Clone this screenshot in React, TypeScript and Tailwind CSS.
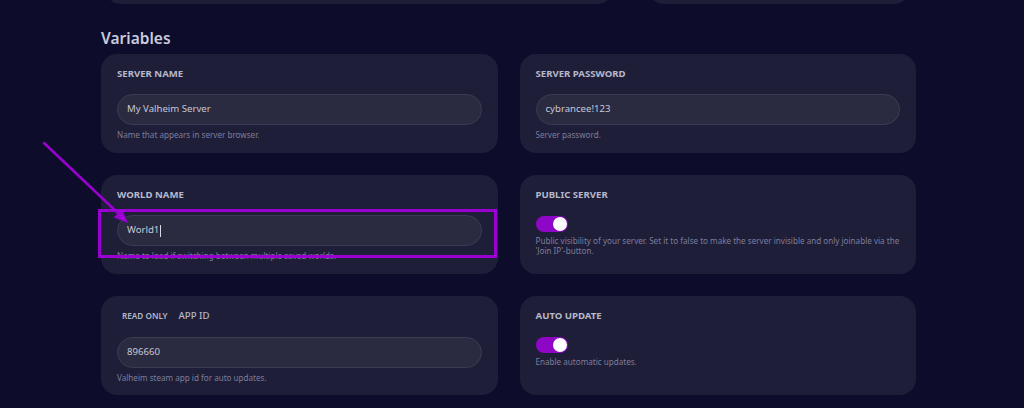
import React from 'react';

type FieldProps = { label: string; value: string; help: string; caret?: boolean };

function TextField({ label, value, help, caret }: FieldProps) {
  return (
    <div className="h-[99px] rounded-[16px] bg-[#1e1e38] px-[16px] pt-[13px]">
      <div className="text-[9.6px] font-bold leading-[14px] text-[#b6b8ca]">{label}</div>
      <div className="mt-[13px] flex h-[31px] items-center rounded-full border border-[#3b3b54] bg-[#2a2a40] px-[9px] text-[9.6px] text-[#c8c8d6]">
        {value}
        {caret && <span className="ml-[1px] inline-block h-[12px] w-[1px] bg-[#d8d8e4]"></span>}
      </div>
      <div className="mt-[4px] text-[8.1px] leading-[12px] text-[#7d7d9a]">{help}</div>
    </div>
  );
}

function Toggle() {
  return (
    <div className="flex h-[16px] w-[32px] items-center justify-end rounded-full bg-[#8e06c6] pr-[1px]">
      <div className="h-[14px] w-[14px] rounded-full bg-white"></div>
    </div>
  );
}

function ToggleField({ label, help }: { label: string; help: string }) {
  return (
    <div className="h-[99px] rounded-[16px] bg-[#1e1e38] px-[16px] pt-[13px]">
      <div className="text-[9.6px] font-bold leading-[14px] text-[#b6b8ca]">{label}</div>
      <div className="mt-[14px]">
        <Toggle />
      </div>
      <div className="mt-[4px] text-[8.1px] leading-[10px] text-[#7d7d9a]">{help}</div>
    </div>
  );
}

export default function App() {
  return (
    <div className="relative h-[408px] w-[1024px] overflow-hidden bg-[#0d0d2b] font-['Noto_Sans',sans-serif]">
      <div className="ml-[101px] w-[815px]">
        {/* Previous section, cut off */}
        <div className="-mt-[36px] flex gap-[35px] pl-[4px]">
          <div className="h-[40px] w-[508px] rounded-[16px] bg-[#1e1e38]"></div>
          <div className="h-[40px] w-[262px] rounded-[16px] bg-[#1e1e38]"></div>
        </div>

        <h2 className="mb-[6px] mt-[24px] text-[15.5px] font-semibold leading-[20px] text-[#c9cbdb]">Variables</h2>

        <div className="grid grid-cols-2 gap-[22px]">
          <TextField label="SERVER NAME" value="My Valheim Server" help="Name that appears in server browser." />
          <TextField label="SERVER PASSWORD" value="cybrancee!123" help="Server password." />
          <TextField
            label="WORLD NAME"
            value="World1"
            help="Name to load if switching between multiple saved worlds."
            caret
          />
          <ToggleField
            label="PUBLIC SERVER"
            help="Public visibility of your server. Set it to false to make the server invisible and only joinable via the 'Join IP'-button."
          />

          {/* Read only field */}
          <div className="h-[99px] rounded-[16px] bg-[#1e1e38] px-[16px] pt-[13px]">
            <div className="flex items-center leading-[14px]">
              <span className="px-[5px] text-[8.2px] font-semibold text-[#b6b8ca]">READ ONLY</span>
              <span className="ml-[6px] text-[9.6px] font-medium text-[#b6b8ca]">APP ID</span>
            </div>
            <div className="mt-[14px] flex h-[31px] items-center rounded-full border border-[#3b3b54] bg-[#2a2a40] px-[9px] text-[9.6px] text-[#c8c8d6]">
              896660
            </div>
            <div className="mt-[4px] text-[8.1px] leading-[12px] text-[#7d7d9a]">Valheim steam app id for auto updates.</div>
          </div>

          <ToggleField label="AUTO UPDATE" help="Enable automatic updates." />
        </div>
      </div>

      {/* Annotation overlay */}
      <div className="absolute left-[98px] top-[209px] h-[49px] w-[399px] border-[3px] border-[#9a00d2]"></div>
      <svg className="absolute left-0 top-0" width="1024" height="408" viewBox="0 0 1024 408">
        <line x1="44" y1="143" x2="120" y2="215" stroke="#9a00d2" strokeWidth="2.5" strokeLinecap="round" />
        <polygon points="128,223 113.8,217.6 122,209" fill="#9a00d2" />
      </svg>
    </div>
  );
}
